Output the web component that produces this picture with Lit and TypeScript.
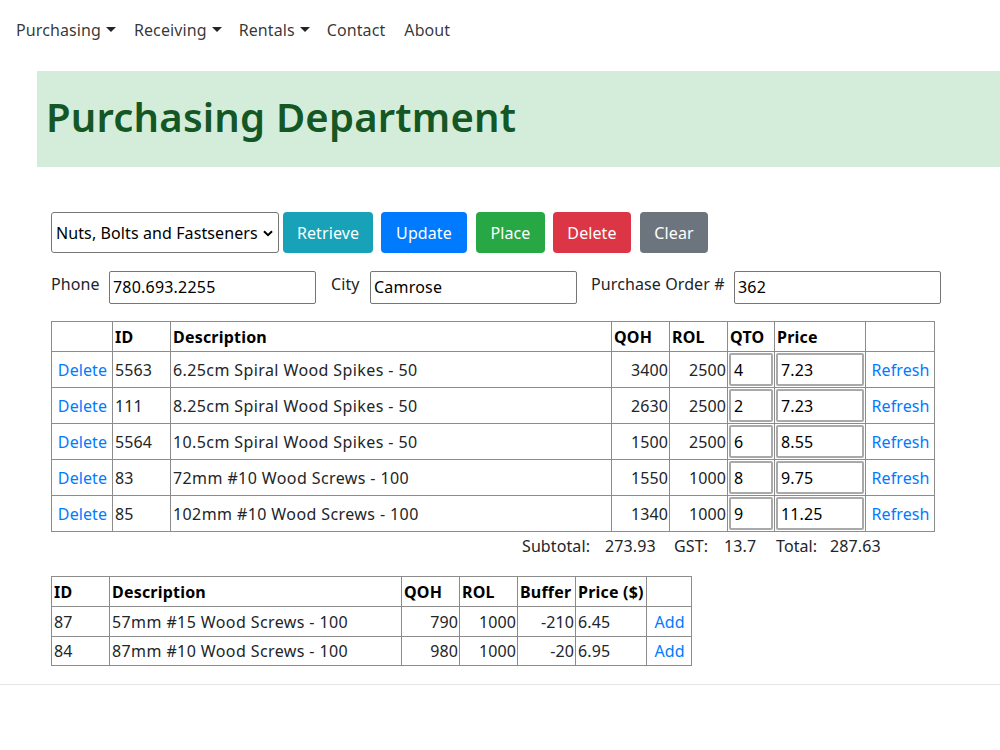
import {css, html, LitElement} from "lit";
import {customElement} from "lit/decorators.js";

const orderRows = [
    {id: "5563", desc: "6.25cm Spiral Wood Spikes - 50", qoh: 3400, rol: 2500, qto: "4", price: "7.23"},
    {id: "111", desc: "8.25cm Spiral Wood Spikes - 50", qoh: 2630, rol: 2500, qto: "2", price: "7.23"},
    {id: "5564", desc: "10.5cm Spiral Wood Spikes - 50", qoh: 1500, rol: 2500, qto: "6", price: "8.55"},
    {id: "83", desc: "72mm #10 Wood Screws - 100", qoh: 1550, rol: 1000, qto: "8", price: "9.75"},
    {id: "85", desc: "102mm #10 Wood Screws - 100", qoh: 1340, rol: 1000, qto: "9", price: "11.25"},
];

const stockRows = [
    {id: "87", desc: "57mm #15 Wood Screws - 100", qoh: 790, rol: 1000, buffer: -210, price: "6.45"},
    {id: "84", desc: "87mm #10 Wood Screws - 100", qoh: 980, rol: 1000, buffer: -20, price: "6.95"},
];

@customElement("app-root")
class AppRoot extends LitElement {
    static styles = css`
    :host {
        display: block;
        font-family: "Noto Sans", "Open Sans", sans-serif;
        font-size: 16px;
        color: #212529;
        letter-spacing: 0.1px;
    }

    nav {
        display: flex;
        height: 60px;
        align-items: center;
        padding-left: 16px;
        color: rgba(0, 0, 0, .8);
    }

    nav span {
        margin-right: 18px;
        display: flex;
        align-items: center;
    }

    nav span:nth-child(2), nav span:nth-child(3) { margin-right: 17px; }
    nav span:nth-child(4) { margin-right: 19px; }

    nav .caret {
        width: 0;
        height: 0;
        margin: 0 0 2px 5px;
        border-top: 5px solid #212529;
        border-left: 5px solid transparent;
        border-right: 5px solid transparent;
    }

    .banner {
        margin: 11px 0 0 37px;
        height: 96px;
        background: #d4edda;
        color: #155724;
        display: flex;
        align-items: center;
        padding: 0 0 4px 9px;
        box-sizing: border-box;
    }

    h1 {
        margin: 0;
        font-size: 40px;
        font-weight: 600;
        letter-spacing: 0.2px;
        line-height: 1.2;
    }

    .content {
        padding: 45px 0 0 51px;
    }

    .actions {
        display: flex;
        height: 41px;
    }

    .select {
        box-sizing: border-box;
        width: 228px;
        border: 1px solid #767676;
        border-radius: 3px;
        display: flex;
        align-items: center;
        justify-content: space-between;
        padding: 1px 5px 0 4px;
        color: #000;
        margin-right: 4px;
    }

    .select svg {
        flex: none;
    }

    .btn {
        box-sizing: border-box;
        border: 1px solid transparent;
        border-radius: 4px;
        color: #fff;
        display: flex;
        align-items: center;
        justify-content: center;
    }

    .info { background: #17a2b8; width: 90px; margin-right: 8px; }
    .primary { background: #007bff; width: 86px; margin-right: 9px; }
    .success { background: #28a745; width: 69px; margin-right: 8px; }
    .danger { background: #dc3545; width: 78px; margin-right: 9px; }
    .secondary { background: #6c757d; width: 68px; }

    .fields {
        display: flex;
        margin-top: 18px;
        height: 33px;
    }

    .fields label {
        line-height: 27px;
        flex: none;
    }

    .phone-label { width: 58px; }
    .city-label { width: 39px; }
    .po-label { width: 143px; }

    .input {
        box-sizing: border-box;
        flex: none;
        border: 1px solid #767676;
        border-radius: 2px;
        width: 207px;
        height: 33px;
        line-height: 31px;
        padding-left: 3px;
        color: #000;
        letter-spacing: 0.2px;
    }

    .gap-right { margin-right: 15px; }
    .gap-right-small { margin-right: 14px; }

    table {
        border-collapse: collapse;
        table-layout: fixed;
        margin-top: 17px;
    }

    th, td {
        border: 1px solid #8c8c8c;
        padding: 0 1px 0 2px;
        text-align: left;
        box-sizing: border-box;
        white-space: nowrap;
        overflow: hidden;
    }

    th {
        font-weight: 700;
        color: #000;
        letter-spacing: 0.2px;
    }

    .orders { width: 883px; }
    .orders thead tr { height: 30px; }
    .orders tbody tr { height: 36px; }

    .stock { width: 640px; margin-top: 18px; }
    .stock tr { height: 30px; }
    .stock tbody tr:last-child { height: 29px; }

    .desc { letter-spacing: 0.4px; }
    .num { text-align: right; }
    .link { color: #007bff; text-align: center; }

    td.box { padding: 1px; }

    .cell-input {
        box-sizing: border-box;
        height: 33px;
        line-height: 30px;
        border: 2px solid #a9a9a9;
        border-radius: 2px;
        padding-left: 3px;
        color: #000;
    }

    .totals {
        display: flex;
        margin: 2px 0 0 471px;
        height: 24px;
        line-height: 24px;
    }

    .totals span { flex: none; }
    .w-subtotal { width: 83px; }
    .w-sub { width: 69px; }
    .w-gst { width: 50px; }
    .w-gstv { width: 52px; }
    .w-total { width: 54px; }

    hr {
        border: 0;
        border-top: 1px solid #e6e6e6;
        margin: 18px 0 0 0;
    }
    `

    render() {
        return html`
            <nav>
                <span>Purchasing<i class="caret"></i></span>
                <span>Receiving<i class="caret"></i></span>
                <span>Rentals<i class="caret"></i></span>
                <span>Contact</span>
                <span>About</span>
            </nav>
            <div class="banner"><h1>Purchasing Department</h1></div>
            <div class="content">
                <div class="actions">
                    <div class="select">
                        <span>Nuts, Bolts and Fastseners</span>
                        <svg width="10" height="7" viewBox="0 0 10 7"><path d="M1 1.2 L5 5.2 L9 1.2" fill="none" stroke="#000" stroke-width="2"/></svg>
                    </div>
                    <div class="btn info">Retrieve</div>
                    <div class="btn primary">Update</div>
                    <div class="btn success">Place</div>
                    <div class="btn danger">Delete</div>
                    <div class="btn secondary">Clear</div>
                </div>
                <div class="fields">
                    <label class="phone-label">Phone</label>
                    <div class="input gap-right">780.693.2255</div>
                    <label class="city-label">City</label>
                    <div class="input gap-right-small">Camrose</div>
                    <label class="po-label">Purchase Order #</label>
                    <div class="input">362</div>
                </div>
                <table class="orders">
                    <colgroup>
                        <col style="width:61px"><col style="width:58px"><col style="width:441px"><col style="width:58px">
                        <col style="width:58px"><col style="width:47px"><col style="width:91px"><col style="width:69px">
                    </colgroup>
                    <thead>
                        <tr><th></th><th>ID</th><th>Description</th><th>QOH</th><th>ROL</th><th>QTO</th><th>Price</th><th></th></tr>
                    </thead>
                    <tbody>
                        ${orderRows.map(r => html`
                            <tr>
                                <td class="link">Delete</td>
                                <td>${r.id}</td>
                                <td class="desc">${r.desc}</td>
                                <td class="num">${r.qoh}</td>
                                <td class="num">${r.rol}</td>
                                <td class="box"><div class="cell-input">${r.qto}</div></td>
                                <td class="box"><div class="cell-input">${r.price}</div></td>
                                <td class="link">Refresh</td>
                            </tr>
                        `)}
                    </tbody>
                </table>
                <div class="totals">
                    <span class="w-subtotal">Subtotal:</span><span class="w-sub">273.93</span>
                    <span class="w-gst">GST:</span><span class="w-gstv">13.7</span>
                    <span class="w-total">Total:</span><span>287.63</span>
                </div>
                <table class="stock">
                    <colgroup>
                        <col style="width:58px"><col style="width:292px"><col style="width:58px"><col style="width:58px">
                        <col style="width:58px"><col style="width:71px"><col style="width:45px">
                    </colgroup>
                    <thead>
                        <tr><th>ID</th><th>Description</th><th>QOH</th><th>ROL</th><th>Buffer</th><th>Price ($)</th><th></th></tr>
                    </thead>
                    <tbody>
                        ${stockRows.map(r => html`
                            <tr>
                                <td>${r.id}</td>
                                <td class="desc">${r.desc}</td>
                                <td class="num">${r.qoh}</td>
                                <td class="num">${r.rol}</td>
                                <td class="num">${r.buffer}</td>
                                <td>${r.price}</td>
                                <td class="link">Add</td>
                            </tr>
                        `)}
                    </tbody>
                </table>
            </div>
            <hr>
        `
    }
}
